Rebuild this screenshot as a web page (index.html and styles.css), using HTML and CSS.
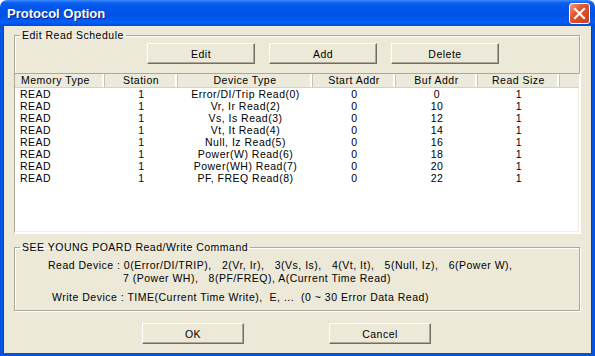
FILE: index.html
```html
<!DOCTYPE html>
<html lang="en">
<head>
    <meta charset="UTF-8">
    <title>Protocol Option</title>
    <link rel="stylesheet" href="styles.css">
</head>
<body>
    <div class="window">
        <div class="titlebar">
            <span class="title">Protocol Option</span>
            <span class="close-btn">
                <svg width="13" height="13" viewBox="0 0 13 13">
                    <path d="M2 2 L11 11 M11 2 L2 11" stroke="#fff" stroke-width="2.2" stroke-linecap="square"/>
                </svg>
            </span>
        </div>

        <div class="client">
            <fieldset class="group schedule">
                <legend>Edit Read Schedule</legend>
                <div class="btn-row top-btns">
                    <button class="btn">Edit</button>
                    <button class="btn">Add</button>
                    <button class="btn">Delete</button>
                </div>

                <div class="listview">
                    <div class="lv-header">
                        <div class="col c1">Memory Type</div>
                        <div class="col c2">Station</div>
                        <div class="col c3">Device Type</div>
                        <div class="col c4">Start Addr</div>
                        <div class="col c5">Buf Addr</div>
                        <div class="col c6">Read Size</div>
                        <div class="col filler"></div>
                    </div>
                    <div class="lv-body">
                        <div class="lv-row"><div class="col c1">READ</div><div class="col c2">1</div><div class="col c3">Error/DI/Trip Read(0)</div><div class="col c4">0</div><div class="col c5">0</div><div class="col c6">1</div></div>
                        <div class="lv-row"><div class="col c1">READ</div><div class="col c2">1</div><div class="col c3">Vr, Ir Read(2)</div><div class="col c4">0</div><div class="col c5">10</div><div class="col c6">1</div></div>
                        <div class="lv-row"><div class="col c1">READ</div><div class="col c2">1</div><div class="col c3">Vs, Is Read(3)</div><div class="col c4">0</div><div class="col c5">12</div><div class="col c6">1</div></div>
                        <div class="lv-row"><div class="col c1">READ</div><div class="col c2">1</div><div class="col c3">Vt, It Read(4)</div><div class="col c4">0</div><div class="col c5">14</div><div class="col c6">1</div></div>
                        <div class="lv-row"><div class="col c1">READ</div><div class="col c2">1</div><div class="col c3">Null, Iz Read(5)</div><div class="col c4">0</div><div class="col c5">16</div><div class="col c6">1</div></div>
                        <div class="lv-row"><div class="col c1">READ</div><div class="col c2">1</div><div class="col c3">Power(W) Read(6)</div><div class="col c4">0</div><div class="col c5">18</div><div class="col c6">1</div></div>
                        <div class="lv-row"><div class="col c1">READ</div><div class="col c2">1</div><div class="col c3">Power(WH) Read(7)</div><div class="col c4">0</div><div class="col c5">20</div><div class="col c6">1</div></div>
                        <div class="lv-row"><div class="col c1">READ</div><div class="col c2">1</div><div class="col c3">PF, FREQ Read(8)</div><div class="col c4">0</div><div class="col c5">22</div><div class="col c6">1</div></div>
                    </div>
                </div>
            </fieldset>

            <fieldset class="group command">
                <legend>SEE YOUNG POARD Read/Write Command</legend>
                <div class="cmd-line read1">Read Device : 0(Error/DI/TRIP),   2(Vr, Ir),   3(Vs, Is),   4(Vt, It),   5(Null, Iz),   6(Power W),</div>
                <div class="cmd-line read2">7 (Power WH),   8(PF/FREQ), A(Current Time Read)</div>
                <div class="cmd-line write">Write Device : TIME(Current Time Write),  E, ...  (0 ~ 30 Error Data Read)</div>
            </fieldset>

            <div class="btn-row bottom-btns">
                <button class="btn wide">OK</button>
                <button class="btn wide">Cancel</button>
            </div>
        </div>
    </div>
</body>
</html>
```

FILE: styles.css
```css
body {
    margin: 0;
    padding: 0;
    font-family: 'Liberation Sans', Arial, sans-serif;
    font-size: 10.5px;
    letter-spacing: 0.5px;
    color: #000;
    background-color: #fff;
}

.window {
    width: 595px;
    height: 356px;
    display: flex;
    flex-direction: column;
}

/* title bar */
.titlebar {
    height: 26px;
    flex: none;
    display: flex;
    align-items: center;
    justify-content: space-between;
    padding: 0 5px 0 7px;
    border-radius: 7px 7px 0 0;
    background: linear-gradient(#3d8bff 0, #0a5ff0 3px, #0055ea 8px, #0052e6 16px, #0060f8 22px, #0049d8 26px);
}

.title {
    color: #fff;
    font-weight: bold;
    font-size: 13px;
    letter-spacing: 0;
    text-shadow: 1px 1px 0 #0a1e8c;
    padding-top: 1px;
}

.close-btn {
    width: 19px;
    height: 19px;
    margin-top: 1px;
    border: 1px solid #fff;
    border-radius: 3px;
    background: linear-gradient(135deg, #f29c84 0, #e2532f 40%, #c8401c 100%);
    display: flex;
    align-items: center;
    justify-content: center;
}

/* client area */
.client {
    flex: 1;
    background-color: #ece9d8;
    border: 3px solid #0553e1;
    border-top: none;
    box-shadow: inset 1px 0 #0a3fc4, inset -1px 0 #0a3fc4;
    padding: 2px 12px 0 11px;
    display: flex;
    flex-direction: column;
}

.group {
    margin: 0;
    padding: 0;
    min-width: 0;
    border: 1px solid #aca899;
    box-shadow: inset 1px 1px #fff, 1px 1px #fff;
}

.group legend {
    padding: 0 2px;
    margin-left: 5px;
    line-height: 14px;
}

/* buttons */
.btn-row {
    display: flex;
}

.top-btns {
    margin-top: 1px;
    padding-left: 132px;
    gap: 14px;
}

.btn {
    width: 108px;
    height: 21px;
    padding: 0;
    font-family: inherit;
    font-size: inherit;
    letter-spacing: inherit;
    color: #000;
    background-color: #ece9d8;
    border: 1px solid;
    border-color: #fff #716f64 #716f64 #fff;
    box-shadow: inset -1px -1px #aca899;
}

.bottom-btns {
    margin-top: 12px;
    padding-left: 128px;
    gap: 85px;
}

.btn.wide {
    width: 102px;
}

/* list view */
.listview {
    margin: 9px -1px -1px -1px;
    height: 160px;
    box-sizing: border-box;
    background-color: #fff;
    border: 1px solid;
    border-color: #aca899 #fff #fff #aca899;
    box-shadow: inset -1px -1px #f1efe2;
}

.lv-header {
    display: flex;
    height: 13px;
    line-height: 13px;
    background-color: #ebeadb;
    border-bottom: 1px solid #d6d2c2;
}

.lv-header .col {
    border-right: 1px solid #c7c5b2;
    box-shadow: inset -2px 0 #fff;
    text-align: center;
}

.lv-header .col.c1 {
    text-align: left;
    padding-left: 6px;
}

.lv-header .filler {
    width: 18px;
    border-right: none;
    box-shadow: none;
}

.lv-row {
    display: flex;
    height: 12px;
    line-height: 12px;
}

.col {
    flex: none;
    box-sizing: border-box;
    white-space: nowrap;
    overflow: hidden;
    text-align: center;
}

.lv-row .c1 {
    text-align: left;
    padding-left: 5px;
}

.c1 { width: 90px; }
.c2 { width: 73px; }
.c3 { width: 135px; }
.c4 { width: 83px; }
.c5 { width: 82px; }
.c6 { width: 82px; }

/* command description */
.command {
    margin-top: 7px;
    padding-bottom: 6px;
}

.cmd-line {
    white-space: pre;
    line-height: 13px;
}

.read1 {
    margin-top: 5px;
    padding-left: 33px;
}

.read2 {
    padding-left: 108px;
}

.write {
    margin-top: 6px;
    padding-left: 37px;
}
```
